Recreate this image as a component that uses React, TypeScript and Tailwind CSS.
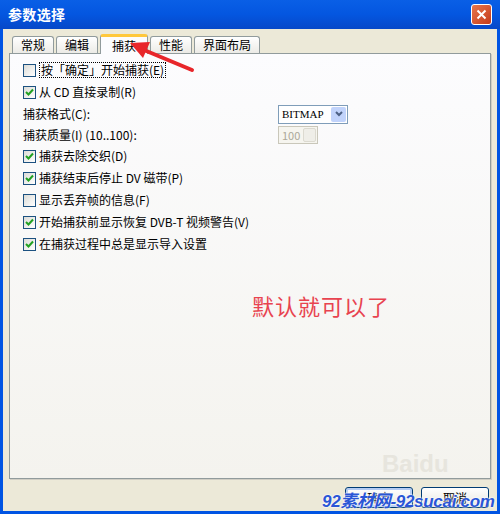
import React from 'react';

const Check = ({ on }: { on: boolean }) => (
  <span className="w-[13px] h-[13px] border border-[#1c5180] bg-gradient-to-br from-[#dcdcd7] to-white flex items-center justify-center shrink-0">
    {on && (
      <svg width="9" height="9" viewBox="0 0 9 9">
        <path d="M1 4 L3.5 6.5 L8 1.5" stroke="#21a121" strokeWidth="2" fill="none" />
      </svg>
    )}
  </span>
);

const Row = ({ on, children }: { on: boolean; children: React.ReactNode }) => (
  <div className="flex items-center gap-[3px] h-[22px]">
    <Check on={on} />
    <span>{children}</span>
  </div>
);

const tabs = ['常规', '编辑', '捕获', '性能', '界面布局'];

export default function App() {
  return (
    <div
      className="w-[500px] h-[514px] bg-[#0054e3] flex flex-col relative overflow-hidden text-[12px] text-black"
      style={{ fontFamily: '"Noto Sans CJK SC", "DejaVu Sans", sans-serif' }}
    >
      {/* title bar */}
      <div className="h-[29px] flex items-center px-[8px] bg-gradient-to-b from-[#0a5fe6] via-[#0456e0] to-[#0648c8] shrink-0">
        <span className="text-white font-bold text-[14px] tracking-wide">参数选择</span>
        <div className="ml-auto w-[21px] h-[21px] rounded-[3px] border border-white bg-gradient-to-br from-[#e8754a] to-[#c4391a] flex items-center justify-center">
          <svg width="11" height="11" viewBox="0 0 11 11">
            <path d="M1.5 1.5 L9.5 9.5 M9.5 1.5 L1.5 9.5" stroke="white" strokeWidth="2" />
          </svg>
        </div>
      </div>

      {/* body */}
      <div className="flex-1 mx-[3px] mb-[3px] bg-[#ece9d8] flex flex-col px-[6px] pt-[6px]">
        {/* tabs */}
        <div className="flex items-end h-[18px] pl-[2px]">
          {tabs.map((t, i) =>
            i === 2 ? (
              <div
                key={t}
                className="h-[20px] px-[11px] mx-[1px] bg-[#fcfcfe] border border-b-0 border-[#919b9c] border-t-[3px] border-t-[#ffc83c] rounded-t-[3px] flex items-center relative z-10 -mb-px"
              >
                {t}
              </div>
            ) : (
              <div
                key={t}
                className="h-[17px] px-[8px] mx-[1px] bg-gradient-to-b from-white to-[#ecebe6] border border-b-0 border-[#919b9c] rounded-t-[3px] flex items-center"
              >
                {t}
              </div>
            )
          )}
        </div>

        {/* panel */}
        <div className="h-[426px] border border-[#919b9c] bg-gradient-to-b from-[#fcfcfe] to-[#f4f3ee] shadow-[1px_1px_0_#d0cec4] pl-[13px] pt-[5px] relative">
          <div className="flex items-center gap-[3px] h-[22px]">
            <Check on={false} />
            <span className="border border-dotted border-black px-[1px] leading-[14px]">按「确定」开始捕获(E)</span>
          </div>
          <Row on={true}>从 CD 直接录制(R)</Row>
          <div className="flex items-center h-[22px]">
            <span className="w-[255px]">捕获格式(C):</span>
            <div className="w-[70px] h-[19px] border border-[#7f9db9] bg-white flex items-center">
              <span className="pl-[3px] text-[11px] flex-1" style={{ fontFamily: '"Liberation Serif", serif' }}>BITMAP</span>
              <span className="w-[15px] h-[15px] mr-px rounded-[2px] bg-[#c1d3fb] flex items-center justify-center">
                <svg width="8" height="6" viewBox="0 0 8 6">
                  <path d="M1 1 L4 4 L7 1" stroke="#4d6185" strokeWidth="2" fill="none" />
                </svg>
              </span>
            </div>
          </div>
          <div className="flex items-center h-[20px]">
            <span className="w-[255px]">捕获质量(I) (10..100):</span>
            <div className="w-[40px] h-[18px] border border-[#c9c7ba] bg-[#f6f5ef] flex items-center">
              <span className="pl-[3px] text-[11px] text-[#aca899] flex-1">100</span>
              <span className="w-[13px] h-[14px] mr-px rounded-[2px] bg-[#efeee8] border border-[#dcdad0]" />
            </div>
          </div>
          <Row on={true}>捕获去除交织(D)</Row>
          <Row on={true}>捕获结束后停止 DV 磁带(P)</Row>
          <Row on={false}>显示丢弃帧的信息(F)</Row>
          <Row on={true}>开始捕获前显示恢复 DVB-T 视频警告(V)</Row>
          <Row on={true}>在捕获过程中总是显示导入设置</Row>

          <div className="mt-[34px] pl-[229px] text-[22px] text-[#e8434f] tracking-[1px]">默认就可以了</div>
        </div>

        {/* buttons */}
        <div className="flex justify-end gap-[8px] mt-[8px] pr-[2px]">
          <div className="w-[68px] h-[21px] rounded-[3px] border border-[#003c74] bg-gradient-to-b from-white to-[#e6e5de] shadow-[inset_0_0_0_2px_#b4ccf4] flex items-center justify-center">
            确定
          </div>
          <div className="w-[68px] h-[21px] rounded-[3px] border border-[#003c74] bg-gradient-to-b from-white to-[#e6e5de] flex items-center justify-center">
            取消
          </div>
        </div>
      </div>

      {/* red arrow */}
      <svg className="absolute left-[126px] top-[38px] z-20" width="70" height="36" viewBox="0 0 70 36">
        <path d="M66 32 L18 12" stroke="#e8262a" strokeWidth="4" strokeLinecap="round" />
        <path d="M4 5 L24 4 L17 20 Z" fill="#e8262a" />
      </svg>

      {/* watermarks */}
      <div className="absolute left-[382px] top-[446px] text-[24px] font-bold text-[#e4e2da] opacity-80" style={{ fontFamily: '"Liberation Sans", sans-serif' }}>
        Baidu
      </div>
      <div
        className="absolute left-[322px] top-[492px] text-[17px] leading-[20px] font-bold italic text-[#2a56d6] whitespace-nowrap tracking-[-0.3px] z-20"
        style={{ fontFamily: '"Liberation Sans", "Noto Sans CJK SC", sans-serif', textShadow: '0 0 2px #fff, 0 0 2px #fff' }}
      >
        92素材网-92sucai.com
      </div>
    </div>
  );
}
